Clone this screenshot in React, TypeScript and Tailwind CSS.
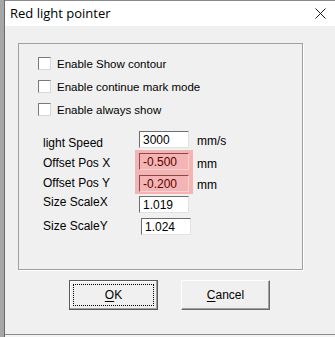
import React from "react";

const UI_FONT = { fontFamily: '"Liberation Sans", Arial, sans-serif' };

function CheckRow({ label }: { label: string }) {
  return (
    <div className="flex h-[23px] items-center">
      <span className="box-border h-[13px] w-[13px] border-t border-l border-r border-b border-t-[#7a7a7a] border-l-[#7a7a7a] border-r-[#d8d8d8] border-b-[#d8d8d8] bg-white" />
      <span className="ml-[6px] text-[11.5px] leading-[14px] text-black">{label}</span>
    </div>
  );
}

function Field({ value, pink = false }: { value: string; pink?: boolean }) {
  return (
    <div
      className={
        "box-border flex h-[17px] w-[50px] items-center border-t border-l border-r border-b pl-[3px] text-[12px] leading-[14px] " +
        (pink
          ? "border-t-[#8a4a4a] border-l-[#8a4a4a] border-r-[#f8d4d4] border-b-[#f8d4d4] bg-[#f4b4b4] text-[#5a0000]"
          : "border-t-[#6e6e6e] border-l-[#6e6e6e] border-r-[#e2e2e2] border-b-[#e2e2e2] bg-white text-black")
      }
    >
      {value}
    </div>
  );
}

export default function App() {
  return (
    <div className="flex h-[337px] w-[335px] overflow-hidden bg-[#a8a8a8]" style={UI_FONT}>
      <div className="w-[4px] shrink-0 bg-[#a6a6a6]" />
      <div className="flex w-[331px] shrink-0 flex-col border-l border-[#6a6a6a]">
        <div className="flex h-[335px] flex-col border-t border-b border-[#8a8a8a]">
          {/* title bar */}
          <div className="flex h-[25px] shrink-0 items-center justify-between bg-white pl-[5px] pr-[9px]">
            <span className="text-[13px] text-black" style={{ fontFamily: '"Open Sans", "Noto Sans", sans-serif' }}>
              Red light pointer
            </span>
            <svg width="11" height="11" viewBox="0 0 11 11">
              <path d="M0.5 0.5 L10.5 10.5 M10.5 0.5 L0.5 10.5" stroke="#1a1a1a" strokeWidth="1" fill="none" />
            </svg>
          </div>

          {/* body */}
          <div className="flex flex-1 flex-col bg-[#f0f0f0] pl-[13px] pt-[17px]">
            <div className="box-border h-[227px] w-[285px] border border-[#a0a0a0] shadow-[1px_1px_0_#ffffff] pl-[19px] pt-[8px]">
              <CheckRow label="Enable Show contour" />
              <CheckRow label="Enable continue mark mode" />
              <CheckRow label="Enable always show" />

              <div className="mt-[10px] flex flex-col pl-[5px] text-[12px] leading-[14px] text-black">
                {/* light speed */}
                <div className="flex h-[17px]">
                  <span className="mt-[5px] w-[96px]">light Speed</span>
                  <Field value="3000" />
                  <span className="ml-[8px] mt-[3px]">mm/s</span>
                </div>

                {/* offsets */}
                <div className="mt-[2px] flex h-[44px]">
                  <div className="flex w-[92px] flex-col gap-[6px] pt-[6px]">
                    <span>Offset Pos X</span>
                    <span>Offset Pos Y</span>
                  </div>
                  <div className="flex w-[58px] flex-col gap-[5px] bg-[#f4b4b4] pl-[4px] pt-[3px]">
                    <Field value="-0.500" pink />
                    <Field value="-0.200" pink />
                  </div>
                  <div className="ml-[4px] flex flex-col gap-[7px] pt-[7px]">
                    <span>mm</span>
                    <span>mm</span>
                  </div>
                </div>

                {/* scales */}
                <div className="mt-[1px] flex h-[18px]">
                  <span className="w-[96px]">Size ScaleX</span>
                  <div className="mt-[1px]">
                    <Field value="1.019" />
                  </div>
                </div>
                <div className="mt-[5px] flex h-[17px]">
                  <span className="mt-[1px] w-[98px]">Size ScaleY</span>
                  <Field value="1.024" />
                </div>
              </div>
            </div>

            {/* buttons */}
            <div className="mt-[10px] flex pl-[51px] text-[12px] text-black">
              <button className="box-border flex h-[30px] w-[89px] items-center justify-center border border-[#5a5a5a] bg-[#f0f0f0] p-[3px] shadow-[inset_-1px_-1px_0_#a0a0a0,inset_1px_1px_0_#ffffff]">
                <span className="flex h-full w-full items-center justify-center border border-dotted border-black">
                  <span className="underline underline-offset-2">O</span>K
                </span>
              </button>
              <button className="ml-[23px] box-border flex h-[30px] w-[89px] items-center justify-center border-t border-l border-r border-b border-t-white border-l-white border-r-[#6a6a6a] border-b-[#6a6a6a] bg-[#f0f0f0] shadow-[inset_-1px_-1px_0_#a0a0a0]">
                <span className="underline underline-offset-2">C</span>ancel
              </button>
            </div>
          </div>
        </div>
        <div className="flex-1 bg-[#f4f4f4]" />
      </div>
    </div>
  );
}
